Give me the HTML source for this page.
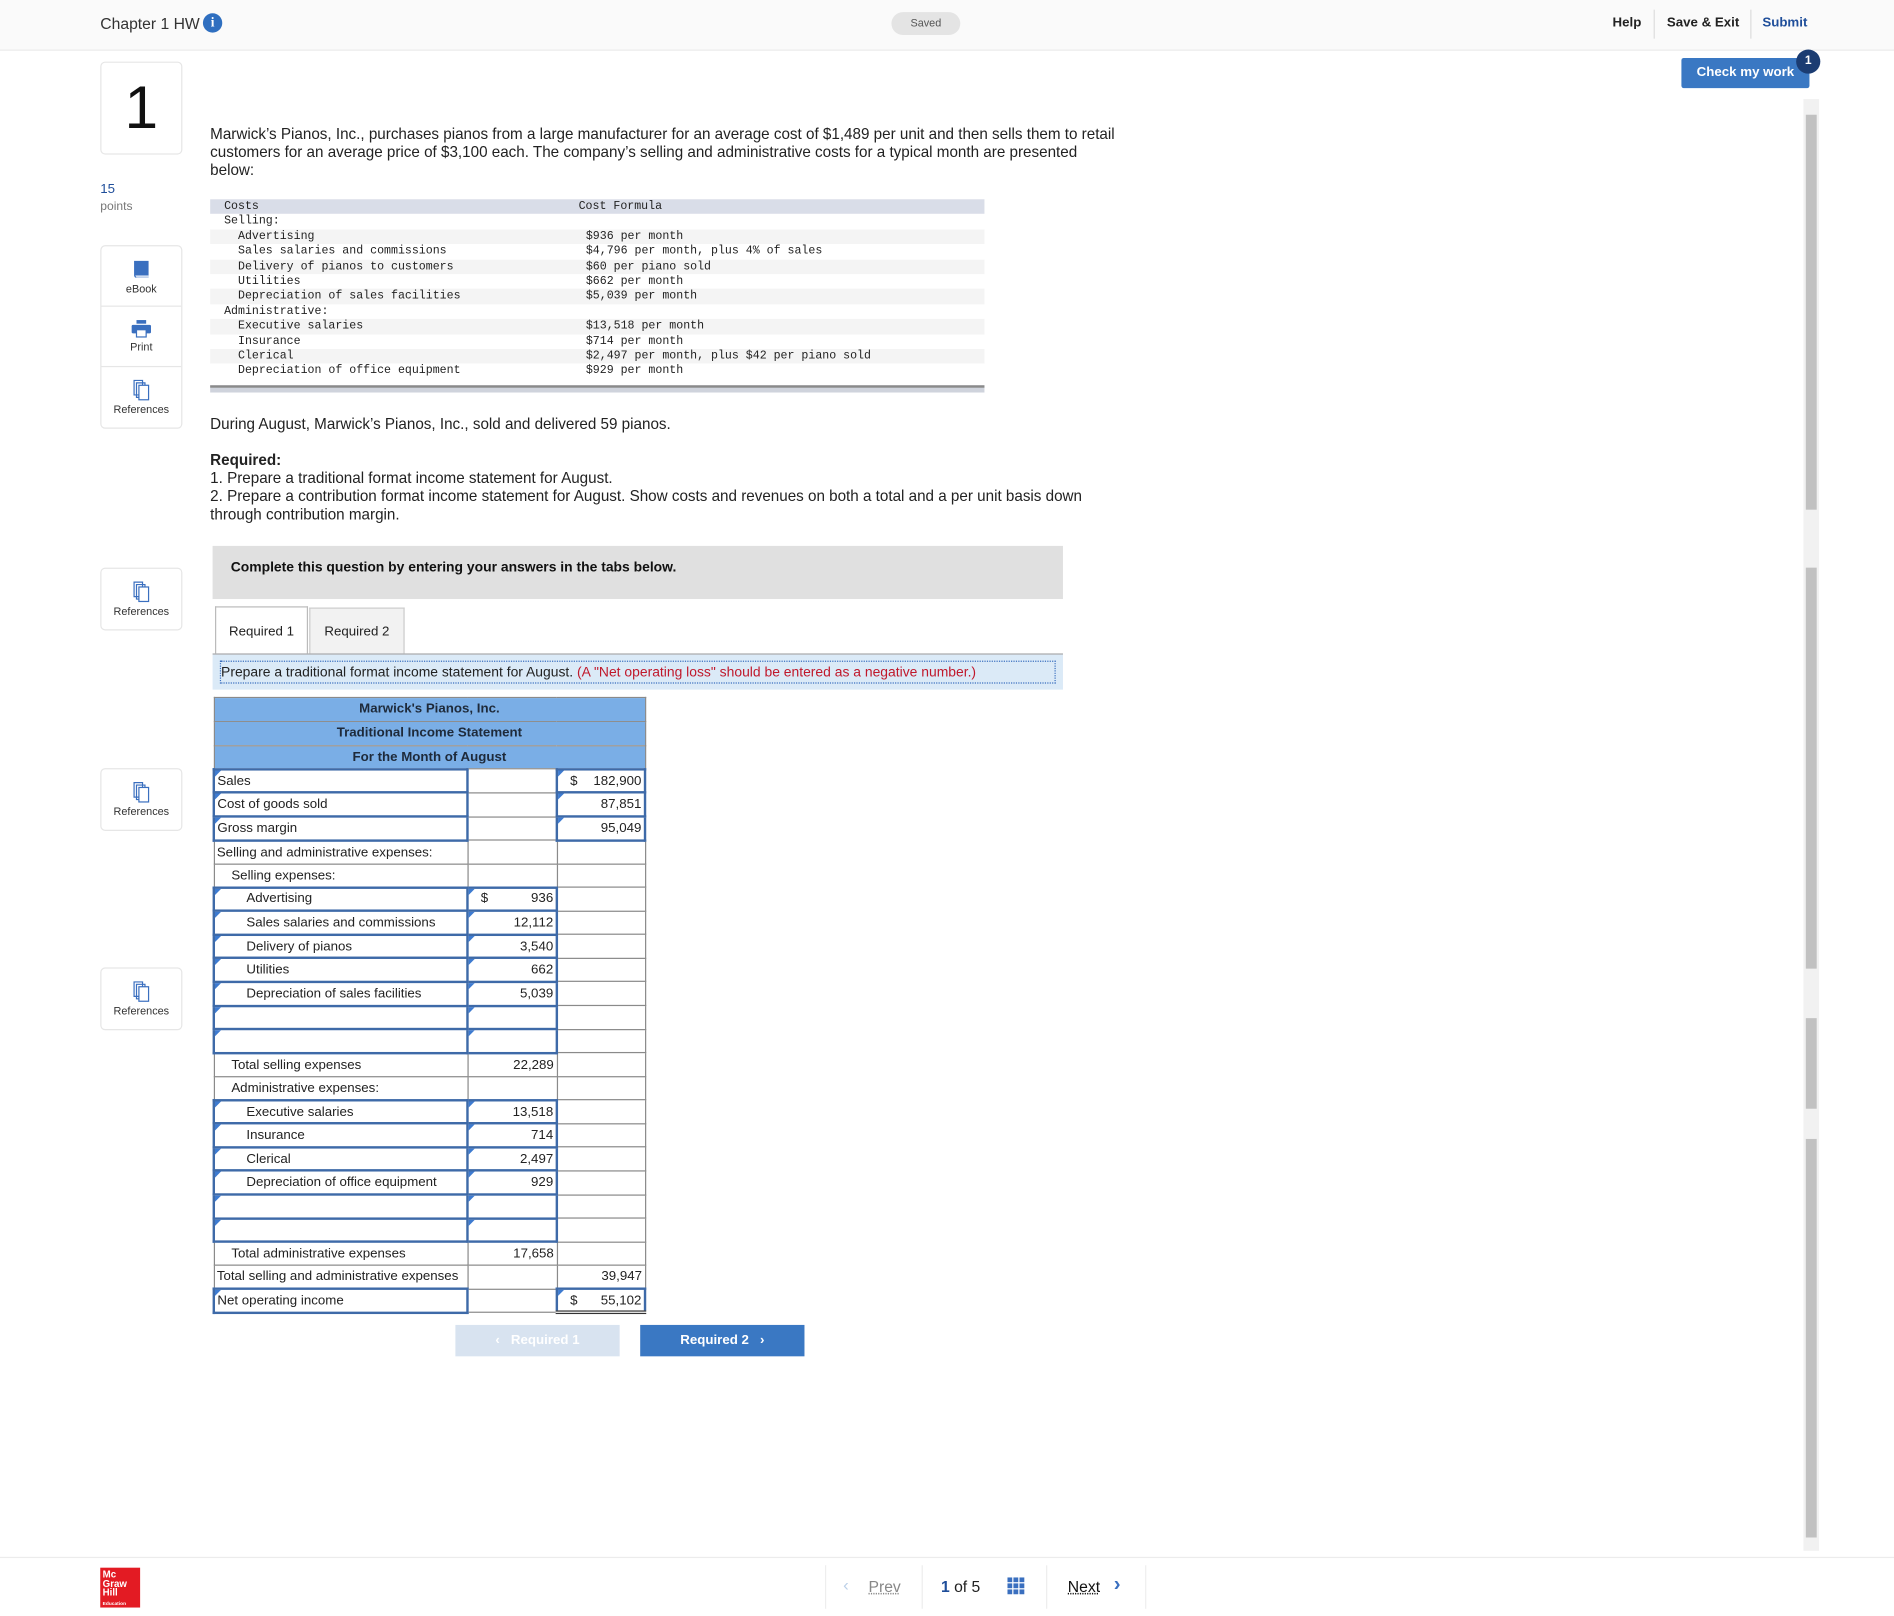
<!DOCTYPE html>
<html><head><meta charset="utf-8"><style>
html,body{margin:0;padding:0;background:#fff;overflow:hidden;width:1894px;height:1616px}
#w{position:absolute;left:0;top:0;width:1568px;height:1338px;transform:scale(1.20791,1.20777);transform-origin:0 0;font-family:"Liberation Sans",Arial,sans-serif;color:#222}
.a{position:absolute}
.hdr{left:0;top:0;width:1568px;height:41px;background:#fafafa;border-bottom:1px solid #ececec}
.mono{font-family:"Liberation Mono",monospace;font-size:9.6px;color:#222}
.ct{left:174px;top:165px;width:641px}
.ct div{height:12.4px;line-height:12.4px;position:relative;white-space:pre}
.ct .g{background:#f4f4f4}
.ct span{position:absolute;left:311px}
.side{left:83px;width:66px;border:1px solid #e6e6e6;border-radius:4px;background:#fff;text-align:center;font-size:9px;color:#333}
.side .it{height:50px;border-bottom:1px solid #e6e6e6;box-sizing:border-box;padding-top:10px}
.side .it:last-child{border-bottom:none}
table.is{position:absolute;left:176px;top:577px;border-collapse:collapse;font-size:11px;color:#222;table-layout:fixed}
table.is td{border:1px solid #8a8a8a;height:19.57px;padding:0 2px;box-sizing:border-box;white-space:nowrap;position:relative}
table.is td.h{background:#7aaee6;text-align:center;font-weight:bold;height:19.8px;color:#1e2a3a}
table.is td.in{border:2px solid #3e6aa8}
table.is td.in:before{content:"";position:absolute;left:0;top:0;border-left:5px solid #3e7bd0;border-bottom:5px solid transparent}
.r{text-align:right}
.i1{padding-left:14px!important}.i2{padding-left:26px!important}
</style></head><body><div id="w">
<div class="a hdr"></div>
<div class="a" style="left:83px;top:12px;font-size:13px;color:#333">Chapter 1 HW</div>
<div class="a" style="left:168px;top:11px;width:16px;height:16px;border-radius:50%;background:#2f6fc0;color:#fff;font:bold 11px 'Liberation Serif',serif;text-align:center;line-height:16px">i</div>
<div class="a" style="left:738px;top:10px;width:57px;height:19px;border-radius:10px;background:#e4e4e4;font-size:9px;color:#555;text-align:center;line-height:19px">Saved</div>
<div class="a" style="left:1335px;top:13px;font-size:11px;font-weight:bold;color:#222">Help</div>
<div class="a" style="left:1369px;top:8px;width:1px;height:24px;background:#ddd"></div>
<div class="a" style="left:1380px;top:13px;font-size:11px;font-weight:bold;color:#222">Save &amp; Exit</div>
<div class="a" style="left:1449px;top:8px;width:1px;height:24px;background:#ddd"></div>
<div class="a" style="left:1459px;top:13px;font-size:11px;font-weight:bold;color:#1f4e9a">Submit</div>
<div class="a" style="left:1392px;top:48px;width:106px;height:25px;background:#3a78c3;border-radius:2px;color:#fff;font-size:11px;font-weight:bold;text-align:center;line-height:25px">Check my work</div>
<div class="a" style="left:1487px;top:41px;width:20px;height:20px;border-radius:50%;background:#1b3c72;color:#fff;font-size:10px;font-weight:bold;text-align:center;line-height:20px">1</div>
<div class="a" style="left:1493px;top:82px;width:13px;height:1202px;background:#f1f1f1"></div>
<div class="a" style="left:1495px;top:95px;width:9px;height:327px;background:#c1c1c1"></div>
<div class="a" style="left:1495px;top:470px;width:9px;height:332px;background:#c1c1c1"></div>
<div class="a" style="left:1495px;top:843px;width:9px;height:75px;background:#c1c1c1"></div>
<div class="a" style="left:1495px;top:943px;width:9px;height:330px;background:#c1c1c1"></div>

<div class="a" style="left:83px;top:51px;width:66px;height:75px;border:1px solid #e6e6e6;border-radius:4px;font-size:50px;text-align:center;line-height:75px;color:#111">1</div>
<div class="a" style="left:83px;top:151px;font-size:11px;color:#1f4e9a">15</div>
<div class="a" style="left:83px;top:166px;font-size:10px;color:#777">points</div>

<div class="a side" style="top:203px">
 <div class="it"><svg width="16" height="18" viewBox="0 0 16 18"><path d="M2 2h12v14H4a2 2 0 0 1-2-2z" fill="#3a6fbf"/><path d="M3 14h11v2H4z" fill="#cfdcf0"/></svg><br>eBook</div>
 <div class="it"><svg width="18" height="16" viewBox="0 0 18 16"><rect x="5" y="1" width="8" height="3" fill="#3a6fbf"/><rect x="1" y="5" width="16" height="7" rx="1" fill="#3a6fbf"/><rect x="5" y="9" width="8" height="6" fill="#fff" stroke="#3a6fbf"/></svg><br>Print</div>
 <div class="it"><svg width="16" height="18" viewBox="0 0 16 18"><path d="M2 1h7v12H2z M4 3h7v12H4z" fill="#fff" stroke="#3a6fbf"/><rect x="6" y="5" width="8" height="12" fill="#fff" stroke="#3a6fbf"/></svg><br>References</div>
</div>
<div class="a side" style="top:470px"><div class="it"><svg width="16" height="18" viewBox="0 0 16 18"><path d="M2 1h7v12H2z M4 3h7v12H4z" fill="#fff" stroke="#3a6fbf"/><rect x="6" y="5" width="8" height="12" fill="#fff" stroke="#3a6fbf"/></svg><br>References</div></div>
<div class="a side" style="top:636px"><div class="it"><svg width="16" height="18" viewBox="0 0 16 18"><path d="M2 1h7v12H2z M4 3h7v12H4z" fill="#fff" stroke="#3a6fbf"/><rect x="6" y="5" width="8" height="12" fill="#fff" stroke="#3a6fbf"/></svg><br>References</div></div>
<div class="a side" style="top:801px"><div class="it"><svg width="16" height="18" viewBox="0 0 16 18"><path d="M2 1h7v12H2z M4 3h7v12H4z" fill="#fff" stroke="#3a6fbf"/><rect x="6" y="5" width="8" height="12" fill="#fff" stroke="#3a6fbf"/></svg><br>References</div></div>

<div class="a" style="left:174px;top:104px;width:775px;font-size:12.6px;line-height:15px;color:#222">Marwick’s Pianos, Inc., purchases pianos from a large manufacturer for an average cost of $1,489 per unit and then sells them to retail customers for an average price of $3,100 each. The company’s selling and administrative costs for a typical month are presented<br>below:</div>

<div class="a ct mono">
<div style="background:#d9dde8">  Costs<span style="left:305px">Cost Formula</span></div>
<div>  Selling:</div>
<div class="g">    Advertising<span>$936 per month</span></div>
<div>    Sales salaries and commissions<span>$4,796 per month, plus 4% of sales</span></div>
<div class="g">    Delivery of pianos to customers<span>$60 per piano sold</span></div>
<div>    Utilities<span>$662 per month</span></div>
<div class="g">    Depreciation of sales facilities<span>$5,039 per month</span></div>
<div>  Administrative:</div>
<div class="g">    Executive salaries<span>$13,518 per month</span></div>
<div>    Insurance<span>$714 per month</span></div>
<div class="g">    Clerical<span>$2,497 per month, plus $42 per piano sold</span></div>
<div>    Depreciation of office equipment<span>$929 per month</span></div>
</div>
<div class="a" style="left:174px;top:319px;width:641px;height:6px;background:#cfd3dc;border-top:2px solid #8a8a8a;box-sizing:border-box"></div>

<div class="a" style="left:174px;top:344px;font-size:12.6px;line-height:15px">During August, Marwick’s Pianos, Inc., sold and delivered 59 pianos.</div>
<div class="a" style="left:174px;top:374px;width:790px;font-size:12.6px;line-height:15px"><b>Required:</b><br>1. Prepare a traditional format income statement for August.<br>2. Prepare a contribution format income statement for August. Show costs and revenues on both a total and a per unit basis down<br>through contribution margin.</div>

<div class="a" style="left:176px;top:452px;width:704px;height:44px;background:#e0e0e0"></div>
<div class="a" style="left:191px;top:464px;font-size:11.5px;font-weight:bold;color:#111">Complete this question by entering your answers in the tabs below.</div>
<div class="a" style="left:178px;top:502px;width:75px;height:40px;border:1px solid #bbb;border-bottom:none;background:#fff;font-size:11px;text-align:center;line-height:40px">Required 1</div>
<div class="a" style="left:256px;top:503px;width:77px;height:38px;border:1px solid #ccc;border-bottom:none;background:#f2f2f2;font-size:11px;text-align:center;line-height:38px">Required 2</div>
<div class="a" style="left:176px;top:541px;width:704px;height:29px;background:#dbeaf7;border-top:1px solid #aaa"></div>
<div class="a" style="left:182px;top:547px;width:690px;height:17px;border:1px dotted #3a6fbf;font-size:11.5px;line-height:19px;white-space:nowrap;overflow:hidden">Prepare a traditional format income statement for August. <span style="color:#c0182b">(A "Net operating loss" should be entered as a negative number.)</span></div>

<table class="is">
<colgroup><col style="width:210px"><col style="width:74px"><col style="width:73px"></colgroup>
<tr><td class="h" colspan="3">Marwick's Pianos, Inc.</td></tr>
<tr><td class="h" colspan="3">Traditional Income Statement</td></tr>
<tr><td class="h" colspan="3">For the Month of August</td></tr>
<tr><td class="in">Sales</td><td></td><td class="in r"><span style="float:left;padding-left:8px">$</span>182,900</td></tr>
<tr><td class="in">Cost of goods sold</td><td></td><td class="in r">87,851</td></tr>
<tr><td class="in">Gross margin</td><td></td><td class="in r">95,049</td></tr>
<tr><td>Selling and administrative expenses:</td><td></td><td></td></tr>
<tr><td class="i1">Selling expenses:</td><td></td><td></td></tr>
<tr><td class="in i2">Advertising</td><td class="in r"><span style="float:left;padding-left:8px">$</span>936</td><td></td></tr>
<tr><td class="in i2">Sales salaries and commissions</td><td class="in r">12,112</td><td></td></tr>
<tr><td class="in i2">Delivery of pianos</td><td class="in r">3,540</td><td></td></tr>
<tr><td class="in i2">Utilities</td><td class="in r">662</td><td></td></tr>
<tr><td class="in i2">Depreciation of sales facilities</td><td class="in r">5,039</td><td></td></tr>
<tr><td class="in"></td><td class="in"></td><td></td></tr>
<tr><td class="in"></td><td class="in"></td><td></td></tr>
<tr><td class="i1">Total selling expenses</td><td class="r">22,289</td><td></td></tr>
<tr><td class="i1">Administrative expenses:</td><td></td><td></td></tr>
<tr><td class="in i2">Executive salaries</td><td class="in r">13,518</td><td></td></tr>
<tr><td class="in i2">Insurance</td><td class="in r">714</td><td></td></tr>
<tr><td class="in i2">Clerical</td><td class="in r">2,497</td><td></td></tr>
<tr><td class="in i2">Depreciation of office equipment</td><td class="in r">929</td><td></td></tr>
<tr><td class="in"></td><td class="in"></td><td></td></tr>
<tr><td class="in"></td><td class="in"></td><td></td></tr>
<tr><td class="i1">Total administrative expenses</td><td class="r">17,658</td><td></td></tr>
<tr><td>Total selling and administrative expenses</td><td></td><td class="r">39,947</td></tr>
<tr><td class="in">Net operating income</td><td></td><td class="in r" style="border-bottom:3px double #333"><span style="float:left;padding-left:8px">$</span>55,102</td></tr>
</table>

<div class="a" style="left:377px;top:1097px;width:136px;height:26px;background:#d8e3f0;color:#fff;font-size:11px;font-weight:bold;text-align:center;line-height:26px">‹&nbsp;&nbsp;&nbsp;Required 1</div>
<div class="a" style="left:530px;top:1097px;width:136px;height:26px;background:#3a78c3;color:#fff;font-size:11px;font-weight:bold;text-align:center;line-height:26px">Required 2&nbsp;&nbsp;&nbsp;›</div>

<div class="a" style="left:0;top:1289px;width:1568px;height:1px;background:#ececec"></div>
<div class="a" style="left:83px;top:1298px;width:33px;height:33px;background:#e31b23;color:#fff;font-size:8px;font-weight:bold;line-height:7.5px;padding:2px 0 0 2px;box-sizing:border-box">Mc<br>Graw<br>Hill<br><span style="font-size:4px">Education</span></div>
<div class="a" style="left:683px;top:1296px;width:1px;height:36px;background:#eee"></div>
<div class="a" style="left:763px;top:1296px;width:1px;height:36px;background:#eee"></div>
<div class="a" style="left:866px;top:1296px;width:1px;height:36px;background:#eee"></div>
<div class="a" style="left:948px;top:1296px;width:1px;height:36px;background:#eee"></div>
<div class="a" style="left:698px;top:1304px;font-size:14px;color:#bcd0e8">‹</div>
<div class="a" style="left:719px;top:1306px;font-size:13px;color:#888;text-decoration:underline dotted">Prev</div>
<div class="a" style="left:779px;top:1306px;font-size:13px;color:#222"><b style="color:#1f4e9a">1</b> of 5</div>
<svg class="a" style="left:834px;top:1306px" width="15" height="15"><g fill="#3a6fbf"><rect x="0" y="0" width="4" height="4"/><rect x="5" y="0" width="4" height="4"/><rect x="10" y="0" width="4" height="4"/><rect x="0" y="5" width="4" height="4"/><rect x="5" y="5" width="4" height="4"/><rect x="10" y="5" width="4" height="4"/><rect x="0" y="10" width="4" height="4"/><rect x="5" y="10" width="4" height="4"/><rect x="10" y="10" width="4" height="4"/></g></svg>
<div class="a" style="left:884px;top:1306px;font-size:13px;color:#111;text-decoration:underline dotted">Next</div>
<div class="a" style="left:922px;top:1302px;font-size:17px;color:#3a6fbf;font-weight:bold">›</div>
</div></body></html>
